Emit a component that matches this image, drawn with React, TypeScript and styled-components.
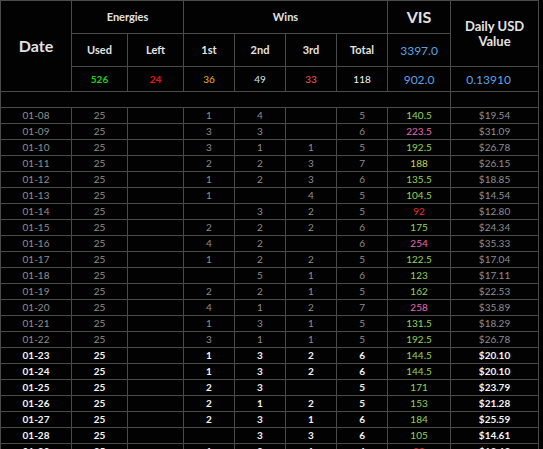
import React from "react";
import styled, { createGlobalStyle } from "styled-components";

const Global = createGlobalStyle`
  html, body { margin: 0; padding: 0; background: #000; }
  body { font-family: "Lato", "Open Sans", sans-serif; color: #ddd; }
`;

const Table = styled.table`
  border-collapse: collapse;
  table-layout: fixed;
  width: 538px;
  background: #020202;
  border-top: 1px solid #c8c8c8;
`;

const Th = styled.th<{ $size?: number }>`
  border: 1px solid #4a4a4a;
  font-weight: 700;
  font-size: ${(p) => p.$size ?? 11}px;
  color: #e2e2e2;
  text-align: center;
  vertical-align: middle;
  padding: 0;
  line-height: 1.15;
`;

const StatCell = styled.td<{ $color: string; $size?: number; $bold?: boolean; $shift?: number }>`
  border: 1px solid #4a4a4a;
  text-align: center;
  color: ${(p) => p.$color};
  font-size: ${(p) => p.$size ?? 10}px;
  font-weight: ${(p) => (p.$bold ? 700 : 400)};
  padding: 0 ${(p) => p.$shift ?? 0}px 0 0;
`;

const HeadRow = styled.tr<{ $h: number }>`
  height: ${(p) => p.$h}px;
`;

const Spacer = styled.td`
  border: 1px solid #4a4a4a;
  padding: 0;
`;

const DataRow = styled.tr`
  height: 16px;
`;

const Cell = styled.td<{ $strong?: boolean; $color?: string }>`
  border: 1px solid #4a4a4a;
  padding: 0;
  height: 15px;
  text-align: center;
  font-size: 10px;
  line-height: 15px;
  color: ${(p) => p.$color ?? (p.$strong ? "#f4f4f4" : "#8e8e8e")};
  font-weight: ${(p) => (p.$strong ? 700 : 400)};
  white-space: nowrap;
`;

type Row = [string, string, string, string, string, string, string, number, string];

const rows: Row[] = [
  ["01-08", "25", "", "1", "4", "", "5", 140.5, "$19.54"],
  ["01-09", "25", "", "3", "3", "", "6", 223.5, "$31.09"],
  ["01-10", "25", "", "3", "1", "1", "5", 192.5, "$26.78"],
  ["01-11", "25", "", "2", "2", "3", "7", 188, "$26.15"],
  ["01-12", "25", "", "1", "2", "3", "6", 135.5, "$18.85"],
  ["01-13", "25", "", "1", "", "4", "5", 104.5, "$14.54"],
  ["01-14", "25", "", "", "3", "2", "5", 92, "$12.80"],
  ["01-15", "25", "", "2", "2", "2", "6", 175, "$24.34"],
  ["01-16", "25", "", "4", "2", "", "6", 254, "$35.33"],
  ["01-17", "25", "", "1", "2", "2", "5", 122.5, "$17.04"],
  ["01-18", "25", "", "", "5", "1", "6", 123, "$17.11"],
  ["01-19", "25", "", "2", "2", "1", "5", 162, "$22.53"],
  ["01-20", "25", "", "4", "1", "2", "7", 258, "$35.89"],
  ["01-21", "25", "", "1", "3", "1", "5", 131.5, "$18.29"],
  ["01-22", "25", "", "3", "1", "1", "5", 192.5, "$26.78"],
  ["01-23", "25", "", "1", "3", "2", "6", 144.5, "$20.10"],
  ["01-24", "25", "", "1", "3", "2", "6", 144.5, "$20.10"],
  ["01-25", "25", "", "2", "3", "", "5", 171, "$23.79"],
  ["01-26", "25", "", "2", "1", "2", "5", 153, "$21.28"],
  ["01-27", "25", "", "2", "3", "1", "6", 184, "$25.59"],
  ["01-28", "25", "", "", "3", "3", "6", 105, "$14.61"],
  ["01-29", "25", "", "1", "2", "1", "4", 98, "$13.63"],
];

function visColor(v: number): string {
  if (v < 100) return "#e8322e";
  if (v > 200) return "#e46cb4";
  if (v >= 186 && v < 190) return "#c4d44a";
  return "#94d256";
}

const widths = [71, 56, 56, 51, 51, 51, 51, 63, 88];

export default function App() {
  return (
    <>
      <Global />
      <Table>
        <colgroup>
          {widths.map((w, i) => (
            <col key={i} style={{ width: w }} />
          ))}
        </colgroup>
        <thead>
          <HeadRow $h={33}>
            <Th rowSpan={3} $size={16}>Date</Th>
            <Th colSpan={2}>Energies</Th>
            <Th colSpan={4}>Wins</Th>
            <Th $size={16}>VIS</Th>
            <Th rowSpan={2} $size={13}>
              Daily USD
              <br />
              Value
            </Th>
          </HeadRow>
          <HeadRow $h={33}>
            <Th>Used</Th>
            <Th>Left</Th>
            <Th>1st</Th>
            <Th>2nd</Th>
            <Th>3rd</Th>
            <Th>Total</Th>
            <StatCell $color="#5ea3e6" $size={12}>3397.0</StatCell>
          </HeadRow>
          <HeadRow $h={25}>
            <StatCell $color="#12d612" $bold>526</StatCell>
            <StatCell $color="#f01010" $bold>24</StatCell>
            <StatCell $color="#f0b21e">36</StatCell>
            <StatCell $color="#d6e2f0">49</StatCell>
            <StatCell $color="#f0584c">33</StatCell>
            <StatCell $color="#eef2f8">118</StatCell>
            <StatCell $color="#5ea3e6" $size={12}>902.0</StatCell>
            <StatCell $color="#5ea3e6" $size={12} $shift={12}>0.13910</StatCell>
          </HeadRow>
          <HeadRow $h={16}>
            <Spacer colSpan={8} />
            <Spacer />
          </HeadRow>
        </thead>
        <tbody>
          {rows.map((r, idx) => {
            const strong = idx >= 15;
            return (
              <DataRow key={r[0]}>
                <Cell $strong={strong}>{r[0]}</Cell>
                <Cell $strong={strong}>{r[1]}</Cell>
                <Cell $strong={strong}>{r[2]}</Cell>
                <Cell $strong={strong}>{r[3]}</Cell>
                <Cell $strong={strong}>{r[4]}</Cell>
                <Cell $strong={strong}>{r[5]}</Cell>
                <Cell $strong={strong}>{r[6]}</Cell>
                <Cell $color={visColor(r[7])}>{r[7]}</Cell>
                <Cell $strong={strong}>{r[8]}</Cell>
              </DataRow>
            );
          })}
        </tbody>
      </Table>
    </>
  );
}
